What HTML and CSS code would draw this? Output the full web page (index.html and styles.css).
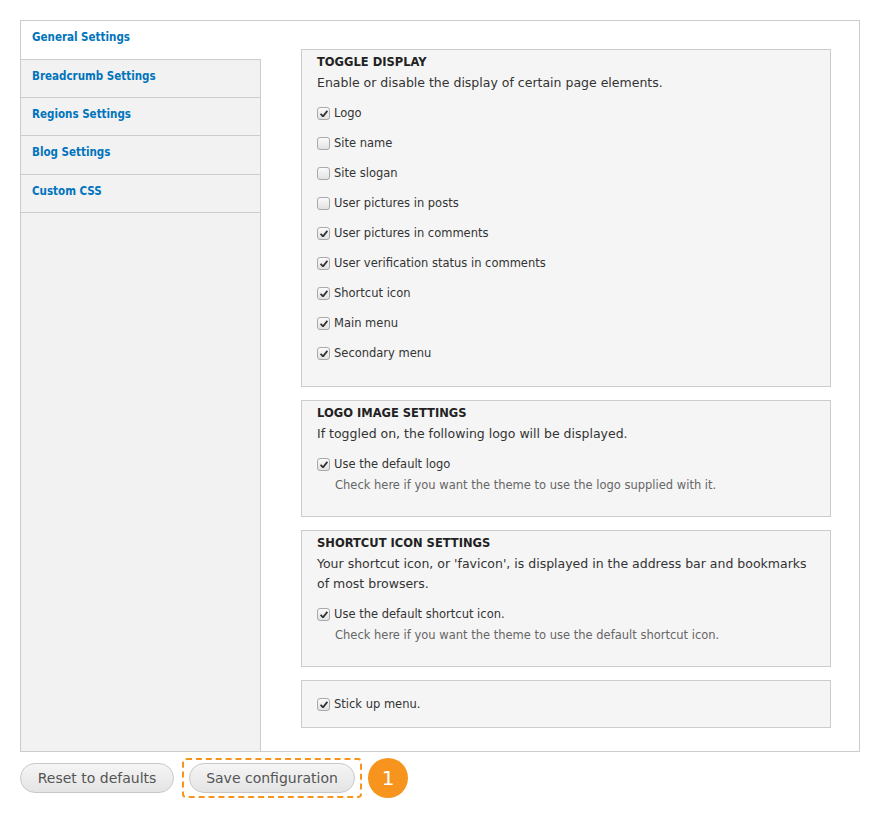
FILE: index.html
```html
<!DOCTYPE html>
<html>
<head>
<meta charset="utf-8">
<link rel="stylesheet" href="styles.css">
</head>
<body>
<div class="page">
  <div class="tabs-wrap">
    <ul class="tabs">
      <li class="tab active">General Settings</li>
      <li class="tab">Breadcrumb Settings</li>
      <li class="tab">Regions Settings</li>
      <li class="tab tall">Blog Settings</li>
      <li class="tab">Custom CSS</li>
      <li class="tab-fill"></li>
    </ul>
    <div class="panes">
      <fieldset class="fs fs1">
        <div class="legend">TOGGLE DISPLAY</div>
        <div class="desc">Enable or disable the display of certain page elements.</div>
        <div class="items">
          <label class="item"><span class="cb on"></span>Logo</label>
          <label class="item"><span class="cb"></span>Site name</label>
          <label class="item"><span class="cb"></span>Site slogan</label>
          <label class="item"><span class="cb"></span>User pictures in posts</label>
          <label class="item"><span class="cb on"></span>User pictures in comments</label>
          <label class="item"><span class="cb on"></span>User verification status in comments</label>
          <label class="item"><span class="cb on"></span>Shortcut icon</label>
          <label class="item"><span class="cb on"></span>Main menu</label>
          <label class="item"><span class="cb on"></span>Secondary menu</label>
        </div>
      </fieldset>
      <fieldset class="fs fs2">
        <div class="legend">LOGO IMAGE SETTINGS</div>
        <div class="desc">If toggled on, the following logo will be displayed.</div>
        <label class="item"><span class="cb on"></span>Use the default logo</label>
        <div class="hint">Check here if you want the theme to use the logo supplied with it.</div>
      </fieldset>
      <fieldset class="fs fs2">
        <div class="legend">SHORTCUT ICON SETTINGS</div>
        <div class="desc">Your shortcut icon, or 'favicon', is displayed in the address bar and bookmarks of most browsers.</div>
        <label class="item"><span class="cb on"></span>Use the default shortcut icon.</label>
        <div class="hint">Check here if you want the theme to use the default shortcut icon.</div>
      </fieldset>
      <fieldset class="fs fs4">
        <label class="item"><span class="cb on"></span>Stick up menu.</label>
      </fieldset>
    </div>
  </div>
  <div class="actions">
    <button class="btn btn-reset">Reset to defaults</button>
    <div class="highlight"><button class="btn btn-save">Save configuration</button></div>
    <span class="badge">1</span>
  </div>
</div>
</body>
</html>
```
FILE: styles.css
```css
* { box-sizing: border-box; }
html, body { margin: 0; padding: 0; background: #fff; }
body {
  font-family: "DejaVu Sans", Verdana, sans-serif;
  font-size: 12px;
  color: #333;
}
.page { padding: 20px 20px 0 20px; width: 880px; }
.tabs-wrap {
  display: flex;
  border: 1px solid #ccc;
  width: 840px;
  height: 732px;
}
.tabs {
  list-style: none;
  margin: 0;
  padding: 0;
  width: 240px;
  display: flex;
  flex-direction: column;
  flex: none;
}
.tab {
  height: 38px;
  padding: 9px 11px 0;
  font-family: "DejaVu Sans Condensed", "DejaVu Sans", sans-serif;
  font-stretch: condensed;
  font-weight: bold;
  font-size: 11.5px;
  color: #0074bd;
  background: #f2f2f2;
  border-right: 1px solid #ccc;
  border-bottom: 1px solid #ccc;
}
.tab.active {
  background: #fff;
  border-right: none;
  height: 39px;
}
.tab.tall { height: 39px; }
.tab-fill {
  flex: 1;
  background: #f2f2f2;
  border-right: 1px solid #ccc;
}
.panes {
  flex: 1;
  padding: 28px 28px 0 40px;
  display: flex;
  flex-direction: column;
  gap: 13px;
}
.fs {
  margin: 0;
  padding: 4px 15px 0 15px;
  border: 1px solid #ccc;
  background: #f5f5f5;
  min-width: 0;
}
.fs1 { height: 338px; }
.legend {
  font-weight: bold;
  font-size: 11.5px;
  color: #222;
  line-height: 16px;
}
.desc {
  font-size: 12.5px;
  line-height: 20px;
  color: #333;
  margin-top: 3px;
}
.items { margin-top: 5px; }
.item {
  display: flex;
  align-items: center;
  height: 30px;
  font-size: 11.5px;
  color: #333;
}
.fs2 { padding-bottom: 23px; }
.fs2 .item { margin-top: 9px; height: 22px; }
.cb {
  width: 13px;
  height: 13px;
  border: 1px solid #a9a9a9;
  border-radius: 3px;
  background: linear-gradient(#fafafa, #e2e2e2);
  margin-right: 4px;
  position: relative;
  flex: none;
}
.cb.on::after {
  content: "";
  position: absolute;
  left: 2px;
  top: 2px;
  width: 8px;
  height: 7px;
  background: no-repeat center/contain url("data:image/svg+xml,%3Csvg xmlns='http://www.w3.org/2000/svg' viewBox='0 0 8 7'%3E%3Cpath d='M0.6 3.8 L3 6.4 L7.4 0.8' fill='none' stroke='%23333' stroke-width='1.8'/%3E%3C/svg%3E");
}
.hint {
  font-size: 11.5px;
  line-height: 16px;
  color: #666;
  margin-left: 18px;
  margin-top: 2px;
}
.fs4 { padding-top: 12px; padding-bottom: 12px; }
.fs4 .item { height: 22px; }
.actions {
  display: flex;
  align-items: center;
  margin-top: 6px;
}
.btn {
  font-family: "DejaVu Sans", Verdana, sans-serif;
  font-size: 14px;
  color: #555;
  height: 30px;
  padding: 0;
  border: 1px solid #c8c8c8;
  border-radius: 15px;
  background: linear-gradient(#f5f5f5, #e4e4e4);
}
.btn-reset { width: 154px; }
.highlight {
  margin-left: 8px;
  border: 2px dashed #f7941d;
  border-radius: 4px;
  padding: 3px 5px;
  display: flex;
}
.btn-save { width: 166px; }
.badge {
  margin-left: 6px;
  width: 40px;
  height: 40px;
  border-radius: 50%;
  background: #f7941d;
  color: #fff;
  font-size: 20px;
  display: flex;
  align-items: center;
  justify-content: center;
}
```
